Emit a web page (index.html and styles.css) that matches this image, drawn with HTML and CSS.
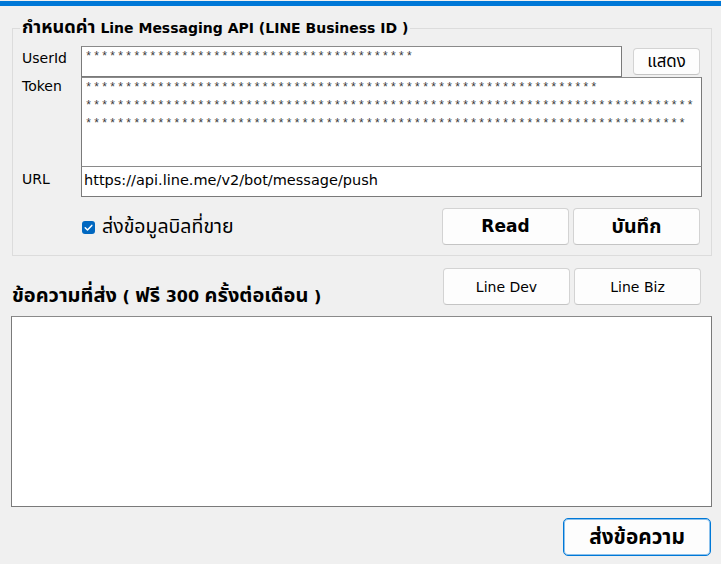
FILE: index.html
```html
<!DOCTYPE html>
<html lang="th">
<head>
<meta charset="utf-8">
<title>Line Messaging API</title>
<link rel="stylesheet" href="styles.css">
</head>
<body>
<div class="window">
  <div class="titlebar"></div>
  <div class="content">
    <fieldset class="group">
      <legend class="group-title"><span class="th">กำหนดค่า</span> Line Messaging API (LINE Business ID )</legend>
      <div class="form">
        <label class="lbl">UserId</label>
        <div class="user-row">
          <div class="input input-line mask">*****************************************</div>
          <button class="btn btn-show"><span class="th">แสดง</span></button>
        </div>
        <label class="lbl lbl-token">Token</label>
        <div class="input input-token mask">****************************************************************<br>****************************************************************************<br>***************************************************************************</div>
        <label class="lbl lbl-url">URL</label>
        <div class="input input-line input-url">https://api.line.me/v2/bot/message/push</div>
      </div>
      <div class="actions">
        <label class="check">
          <span class="check-box"><svg width="13" height="13" viewBox="0 0 13 13"><path d="M3.2 6.7 L5.5 9 L9.8 4.4" fill="none" stroke="#fff" stroke-width="1.5" stroke-linecap="round" stroke-linejoin="round"/></svg></span>
          <span class="check-text">ส่งข้อมูลบิลที่ขาย</span>
        </label>
        <div class="btn-pair">
          <button class="btn btn-big">Read</button>
          <button class="btn btn-big"><span class="th">บันทึก</span></button>
        </div>
      </div>
    </fieldset>

    <div class="msg-head">
      <h2 class="msg-title"><span class="th">ข้อความที่ส่ง</span> ( <span class="th">ฟรี</span> 300 <span class="th">ครั้งต่อเดือน</span> )</h2>
      <div class="btn-pair btn-pair-links">
        <button class="btn btn-link">Line Dev</button>
        <button class="btn btn-link">Line Biz</button>
      </div>
    </div>

    <div class="input msg-box"></div>

    <div class="footer">
      <button class="btn btn-send"><span class="th">ส่งข้อความ</span></button>
    </div>
  </div>
</div>
</body>
</html>
```

FILE: styles.css
```css
* { box-sizing: border-box; }

html, body {
  margin: 0;
  padding: 0;
  background: #f0f0f0;
}

body {
  font-family: "DejaVu Sans", "Noto Sans Thai", "Noto Sans", sans-serif;
  color: #000;
  width: 721px;
  height: 564px;
  overflow: hidden;
}

.th {
  font-size: 1.3em;
  line-height: 1;
}

.window {
  width: 721px;
  height: 564px;
  background: #f0f0f0;
  padding-top: 1px;
}

.titlebar {
  height: 5px;
  background: #0078d7;
}

.content {
  padding: 12px 9px 0 11px;
}

/* group box */
.group {
  margin: 0 0 0 1px;
  padding: 8px 9px 10px 9px;
  border: 1px solid #dcdcdc;
  min-width: 0;
}

.group-title {
  font-size: 14px;
  font-weight: bold;
  padding: 0 2px;
  margin-left: -2px;
  line-height: 18px;
  height: 20px;
  color: #000;
}

.form {
  display: grid;
  grid-template-columns: 59px 621px;
}

.lbl {
  font-size: 14px;
  color: #000;
  padding-top: 4px;
}

.lbl-token {
  padding-top: 1px;
}

.lbl-url {
  padding-top: 4px;
}

.user-row {
  display: grid;
  grid-template-columns: 541px 67px;
  column-gap: 11px;
  align-items: start;
}

.input {
  background: #fff;
  border: 1px solid #7a7a7a;
  border-top-color: #8a8a8a;
}

.input-line {
  height: 31px;
  padding: 4px 2px;
  font-size: 14.5px;
  line-height: 19px;
  white-space: nowrap;
  overflow: hidden;
}

.mask {
  font-family: "Liberation Mono", monospace;
  font-size: 12px;
  color: #3a3a3a;
  letter-spacing: 0.82px;
}

.input-line.mask {
  padding: 1px 3px;
  font-size: 12px;
  line-height: 18px;
}

.input-token {
  height: 90px;
  padding: 1px 3px;
  line-height: 18px;
  white-space: nowrap;
  overflow: hidden;
}

.input-url {
  margin-top: -1px;
  color: #000;
}

/* buttons */
.btn {
  font-family: inherit;
  background: #fdfdfd;
  border: 1px solid #d3d3d3;
  border-bottom-color: #c4c4c4;
  border-radius: 4px;
  color: #000;
  padding: 0;
  cursor: default;
  line-height: 1;
}

.btn-show {
  height: 27px;
  margin-top: 2px;
  font-size: 13px;
}

.actions {
  display: flex;
  align-items: center;
  justify-content: space-between;
  margin-top: 11px;
  padding-left: 60px;
  padding-right: 2px;
}

.check {
  display: flex;
  align-items: center;
  gap: 7px;
  margin-top: 1px;
}

.check-box {
  width: 13px;
  height: 13px;
  border-radius: 3px;
  background: #0067c0;
  display: block;
}

.check-box svg { display: block; }

.check-text {
  font-size: 19.5px;
  line-height: 22px;
}

.btn-pair {
  display: flex;
  gap: 4px;
}

.btn-big {
  width: 127px;
  height: 37px;
  font-size: 17px;
  font-weight: bold;
}

.btn-big .th {
  font-size: 1.15em;
}

.msg-head {
  display: flex;
  justify-content: space-between;
  align-items: flex-end;
  margin-top: 12px;
  padding-left: 1px;
  padding-right: 11px;
}

.msg-title {
  margin: 0;
  font-size: 16px;
  font-weight: bold;
  line-height: 22px;
  position: relative;
  top: 3px;
}

.msg-title .th {
  font-size: 1.25em;
}

.btn-link {
  width: 127px;
  height: 37px;
  font-size: 14px;
}

.msg-box {
  margin-top: 11px;
  height: 191px;
  width: 701px;
}

.footer {
  display: flex;
  justify-content: flex-end;
  margin-top: 11px;
  padding-right: 1px;
}

.btn-send {
  width: 148px;
  height: 38px;
  border: 1px solid #0078d7;
  box-shadow: inset 0 0 0 1px rgba(0, 120, 215, 0.45);
  border-radius: 5px;
  font-size: 16px;
  font-weight: bold;
}
```
